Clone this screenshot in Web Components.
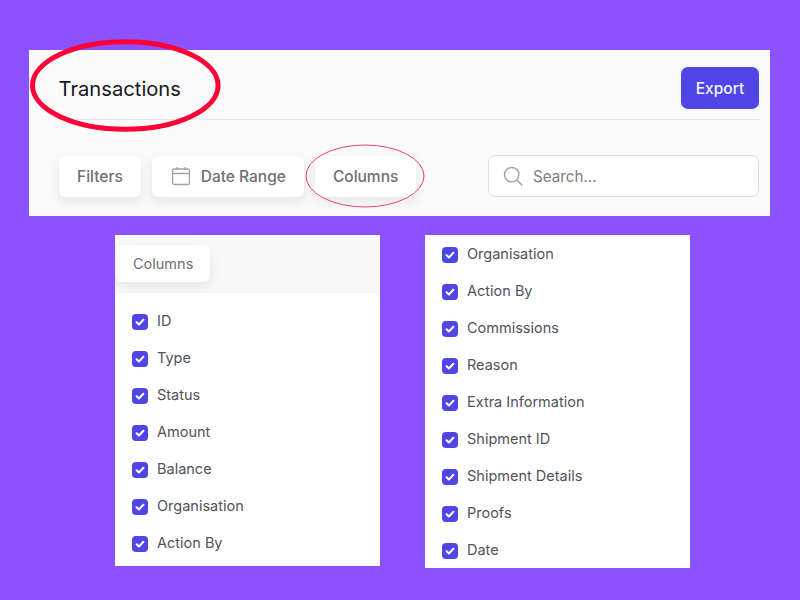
<!DOCTYPE html>
<html lang="en">
  <head>
    <meta charset="utf-8">
    <title>Transactions columns</title>
    <style>
      html, body {
        margin: 0;
        height: 100%;
      }
      body {
        background: #8c52ff;
        font-family: Inter, "Liberation Sans", sans-serif;
        overflow: hidden;
        padding: 50px 0 0 29px;
        box-sizing: border-box;
      }
      .lists {
        display: flex;
        align-items: flex-start;
        gap: 45px;
        margin: 19px 0 0 86px;
      }
    </style>
    <script>
      const shadowOf = (element, html) => {
        element.attachShadow({ mode: 'open' }).innerHTML = html;
      };
      customElements.define('ui-button', class extends HTMLElement {
        constructor() {
          super();
          shadowOf(this, `<style>
            :host { display: inline-flex; align-items: center; height: 41px; box-sizing: border-box; padding: 0 18px; gap: 10px;
              background: #fff; border-radius: 6px; box-shadow: 0 4px 12px rgba(0,0,0,.09); color: #6f6f73;
              font-size: 15.5px; font-weight: 500; white-space: nowrap; }
            ::slotted(svg) { display: block; margin-left: 1px; }
          </style><slot></slot>`);
        }
      });
      customElements.define('export-button', class extends HTMLElement {
        constructor() {
          super();
          shadowOf(this, `<style>
            :host { display: flex; align-items: center; justify-content: center; width: 78px; height: 42px;
              background: #4f46e5; border-radius: 7px; color: #f4f4ff; font-size: 15.5px; font-weight: 500; }
          </style><slot></slot>`);
        }
      });
      customElements.define('search-box', class extends HTMLElement {
        constructor() {
          super();
          shadowOf(this, `<style>
            :host { display: flex; align-items: center; gap: 10px; width: 271px; height: 42px; box-sizing: border-box; padding-left: 14px;
              background: #fff; border: 1px solid #dcdcdc; border-radius: 7px; color: #7d7d80; font-size: 15.2px; }
            svg { display: block; }
          </style>
          <svg width="20" height="20" viewBox="0 0 20 20" fill="none" stroke="#a3a3a3" stroke-width="1.4" stroke-linecap="round">
            <circle cx="8.7" cy="8.7" r="7.2"/><path d="M13.9 13.9l5 5"/>
          </svg><slot></slot>`);
        }
      });
      customElements.define('transactions-panel', class extends HTMLElement {
        constructor() {
          super();
          shadowOf(this, `<style>
            :host { display: block; position: relative; width: 741px; height: 166px; box-sizing: border-box; padding: 17px 11px 0 30px; background: #fafafa; }
            header { display: flex; align-items: flex-start; justify-content: space-between; height: 52px; border-bottom: 1px solid #e8e8e8; margin-bottom: -1px; }
            h1 { margin: 0 0 0 -0.5px; color: #18181b; font-size: 20.2px; font-weight: 400; line-height: 44px; }
            .tools { display: flex; align-items: center; justify-content: space-between; margin-top: 36px; }
            .buttons { display: flex; gap: 11px; }
            svg.ring { position: absolute; left: 0; top: 0; overflow: visible; pointer-events: none; }
          </style>
          <header><h1><slot name="title"></slot></h1><slot name="action"></slot></header>
          <div class="tools"><div class="buttons"><slot name="buttons"></slot></div><slot name="search"></slot></div>
          <svg class="ring" width="741" height="166" fill="none">
            <ellipse cx="96.3" cy="35.5" rx="92.8" ry="43.7" stroke="#ff0037" stroke-width="5"/>
            <ellipse cx="336" cy="126" rx="59" ry="31" stroke="#f0426e" stroke-width="1"/>
          </svg>`);
        }
      });
      customElements.define('check-row', class extends HTMLElement {
        constructor() {
          super();
          shadowOf(this, `<style>
            :host { display: flex; align-items: center; gap: 9px; height: 37px; color: #52525b; font-size: 14.5px; }
            .box { width: 16px; height: 16px; border-radius: 4px; background: #4f46e5; display: flex; align-items: center; justify-content: center; }
            .label { padding-bottom: 2px; }
            svg { display: block; }
          </style>
          <span class="box"><svg width="10" height="10" viewBox="0 0 10 10" fill="none" stroke="#fff" stroke-width="2" stroke-linecap="round" stroke-linejoin="round"><path d="M1.6 5.3l2.3 2.2 4.5-4.8"/></svg></span>
          <span class="label"><slot></slot></span>`);
        }
      });
      customElements.define('column-list', class extends HTMLElement {
        constructor() {
          super();
          shadowOf(this, `<style>
            :host { display: block; width: 265px; box-sizing: border-box; background: #f9f9f9; overflow: hidden; }
            :host([plain]) { height: 333px; background: #fff; }
            .head { display: flex; align-items: flex-start; height: 58px; padding: 10px 0 0 1px; box-sizing: border-box; }
            :host([plain]) .head { display: none; }
            .list { padding: 10px 17px 4px; border-radius: 6px 6px 0 0; background: #fff; box-shadow: 0 0 2px rgba(0,0,0,.08); }
            :host([plain]) .list { padding: 1px 17px 0; border-radius: 0; box-shadow: none; }
            ui-button { height: 37px; padding: 0 17px; font-size: 14.5px; font-weight: 400; }
          </style>
          <div class="head"><ui-button>Columns</ui-button></div>
          <div class="list"><slot></slot></div>`);
        }
      });
    </script>
  </head>
  <body>
    <transactions-panel>
      <span slot="title">Transactions</span>
      <export-button slot="action">Export</export-button>
      <ui-button slot="buttons">Filters</ui-button>
      <ui-button slot="buttons">
        <svg width="20" height="20" viewBox="0 0 20 20" fill="none" stroke="#a3a3a3" stroke-width="1.3"><rect x="1.6" y="3" width="16.8" height="15.5" rx="1.5"/><path d="M1.6 7.5h16.8M6 1v3M14 1v3"/></svg>
        Date Range
      </ui-button>
      <ui-button slot="buttons">Columns</ui-button>
      <search-box slot="search">Search...</search-box>
    </transactions-panel>
    <div class="lists">
      <column-list>
        <check-row>ID</check-row>
        <check-row>Type</check-row>
        <check-row>Status</check-row>
        <check-row>Amount</check-row>
        <check-row>Balance</check-row>
        <check-row>Organisation</check-row>
        <check-row>Action By</check-row>
      </column-list>
      <column-list plain>
        <check-row>Organisation</check-row>
        <check-row>Action By</check-row>
        <check-row>Commissions</check-row>
        <check-row>Reason</check-row>
        <check-row>Extra Information</check-row>
        <check-row>Shipment ID</check-row>
        <check-row>Shipment Details</check-row>
        <check-row>Proofs</check-row>
        <check-row>Date</check-row>
      </column-list>
    </div>
  </body>
</html>
